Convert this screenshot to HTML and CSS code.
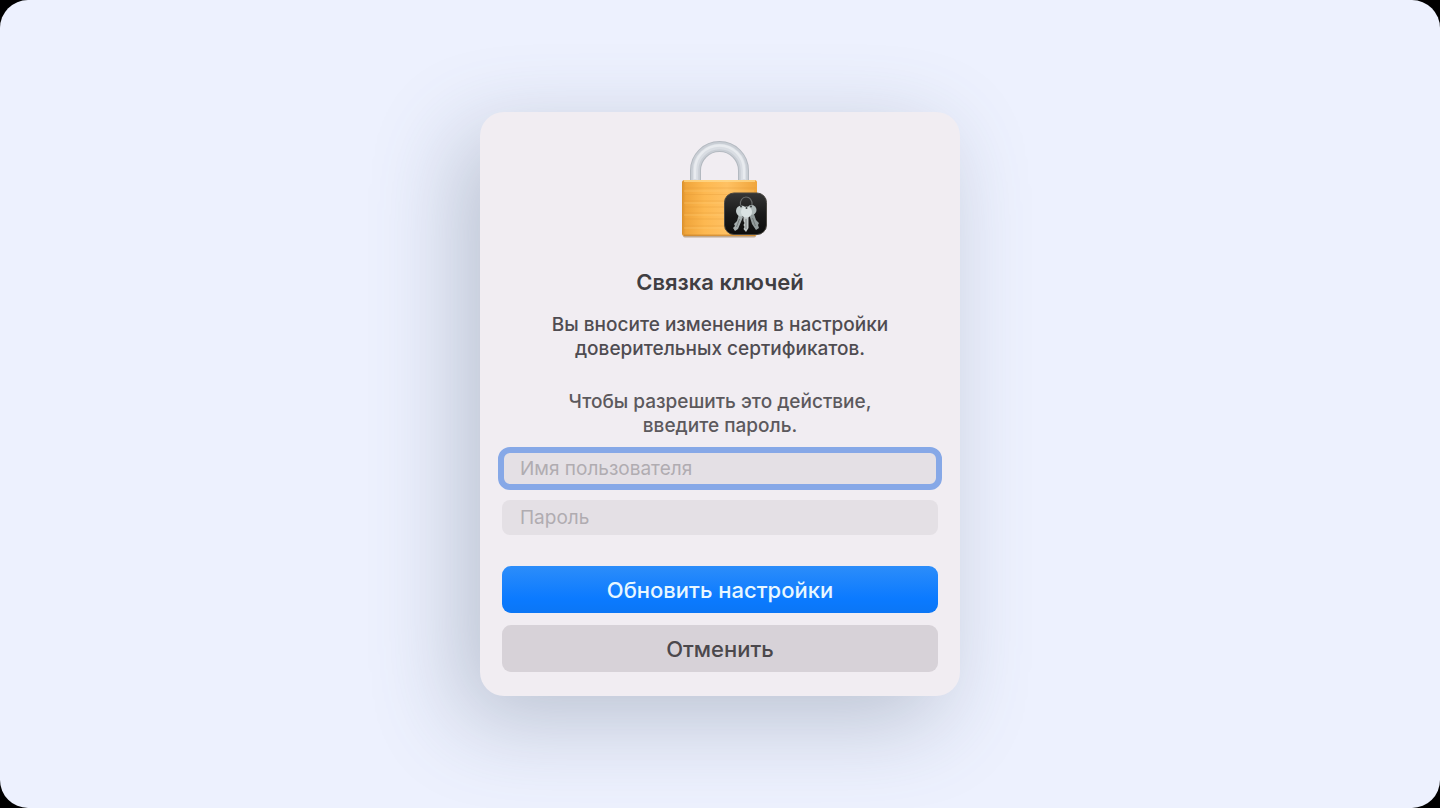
FILE: index.html
```html
<!DOCTYPE html>
<html lang="ru">
<head>
    <meta charset="UTF-8">
    <meta name="viewport" content="width=device-width, initial-scale=1.0">
    <title>Связка ключей</title>
    <link rel="stylesheet" href="styles.css">
</head>
<body>
    <main class="stage">
        <form class="dialog">
            <svg class="lock" viewBox="670 138 100 102" aria-hidden="true">
                <defs>
                    <linearGradient id="brass" x1="0" x2="1" y1="0" y2="0">
                        <stop offset="0" stop-color="#d98f2c"/>
                        <stop offset="0.05" stop-color="#f0a53b"/>
                        <stop offset="0.3" stop-color="#fdb850"/>
                        <stop offset="0.6" stop-color="#ffc162"/>
                        <stop offset="1" stop-color="#f0a53c"/>
                    </linearGradient>
                    <linearGradient id="tile" x1="0" x2="0" y1="0" y2="1">
                        <stop offset="0" stop-color="#363636"/>
                        <stop offset="0.5" stop-color="#1b1b1b"/>
                        <stop offset="1" stop-color="#0c0c0c"/>
                    </linearGradient>
                </defs>
                <!-- shackle -->
                <g fill="none">
                    <path d="M695.500 180.500V170.500a24 24 0 0 1 48 0v10" stroke="#b3b9c0" stroke-width="11"/>
                    <path d="M695.500 180.500V170.500a24 24 0 0 1 48 0v10" stroke="#c9ced5" stroke-width="9"/>
                    <path d="M695.500 180.500V170.500a24 24 0 0 1 48 0v10" stroke="#d9dde3" stroke-width="5.500"/>
                    <path d="M695 179V170a24.500 24.500 0 0 1 49 0v9" stroke="#e8ebef" stroke-width="2.500"/>
                </g>
                <!-- body -->
                <rect x="683" y="233" width="73" height="4.500" rx="1.700" fill="#a98c68" opacity="0.700"/>
                <rect x="682" y="180" width="75" height="56" rx="2.500" fill="url(#brass)"/>
                <path d="M684 181h71" stroke="#ffdb8d" stroke-width="1.500"/>
                <path d="M683 188h73M683 194.500h73M683 201h73M683 207h73M683 213h73M683 219h73M683 226h73" stroke="#e39a38" stroke-width="0.700" opacity="0.450"/>
                <path d="M684 191h70M684 203h70M684 215h70M684 228h70" stroke="#ffd17d" stroke-width="0.800" opacity="0.500"/>
                <path d="M684 235.200h71" stroke="#c6812e" stroke-width="1"/>
                <!-- badge with keys -->
                <rect x="724.500" y="193" width="42" height="41.500" rx="9.500" fill="url(#tile)" stroke="#4b4842" stroke-width="1"/>
                <path d="M740.500 205c-1-4 2-8 5.500-8s6.500 3 6 8" fill="none" stroke="#696c6c" stroke-width="1.200"/>
                <path d="M739 214l4 3-5 12-3 2-2-3 2-2-1-2 3-3z" fill="#a5adad"/>
                <path d="M749 214l4-3 3 9 3 3-1 2 1 3-3 2-4-6z" fill="#929b9b"/>
                <path d="M743.500 214h5v14l-2.500 4-2.500-3 1-2-1-2 1-2-1-2z" fill="#c0c6c6"/>
                <circle cx="741.500" cy="211" r="5.500" fill="#c4cece"/>
                <circle cx="751.500" cy="210" r="5" fill="#afb9b9"/>
                <circle cx="746.500" cy="212" r="5.500" fill="#dae2e2"/>
                <circle cx="741" cy="206.500" r="1" fill="#3b4040"/>
                <circle cx="746.500" cy="208" r="1" fill="#3b4040"/>
                <circle cx="751" cy="206.500" r="1" fill="#3b4040"/>
                <path d="M746 219v10M739.500 219l-3 8M752.500 218l3 8" stroke="#69706f" stroke-width="0.800" fill="none"/>
            </svg>
            <h1 class="title">Связка ключей</h1>
            <p class="message">Вы вносите изменения в настройки доверительных сертификатов.</p>
            <p class="message hint">Чтобы разрешить это действие, введите пароль.</p>
            <input class="field active" type="text" aria-label="Имя пользователя" placeholder="Имя пользователя">
            <input class="field" type="password" aria-label="Пароль" placeholder="Пароль">
            <div class="actions">
                <button class="button primary" type="submit">Обновить настройки</button>
                <button class="button" type="button">Отменить</button>
            </div>
        </form>
    </main>
</body>
</html>
```
FILE: styles.css
```css
* {
    box-sizing: border-box;
}
body {
    margin: 0;
    background-color: #000;
    font-family: Inter, "Liberation Sans", sans-serif;
}
.stage {
    display: flex;
    justify-content: center;
    align-items: center;
    min-height: 100vh;
    background-color: #edf1fe;
    border-radius: 28px;
    overflow: hidden;
}
.dialog {
    display: flex;
    flex-direction: column;
    width: 480px;
    max-width: 100%;
    padding: 26px 22px 24px;
    background-color: #f1edf2;
    border-radius: 24px;
    box-shadow: -20px 24px 88px rgba(80, 95, 115, 0.32);
}
.lock {
    width: 100px;
    height: 102px;
    align-self: center;
}
.title {
    margin: 28px 0 17px;
    font-size: 22px;
    line-height: 28px;
    font-weight: 600;
    text-align: center;
    color: #403e42;
}
.message {
    max-width: 360px;
    margin: 0 auto 29px;
    font-size: 19px;
    line-height: 24px;
    font-weight: 500;
    text-align: center;
    color: #4f4c51;
}
.hint {
    max-width: 320px;
    margin-bottom: 13px;
    color: #5c595d;
}
.field {
    width: 100%;
    height: 35px;
    margin: 0 0 14px;
    padding: 0 18px;
    border: none;
    border-radius: 8px;
    background-color: #e4e0e5;
    font-family: inherit;
    font-size: 19px;
    color: #4f4c51;
}
.field::placeholder {
    color: #b0acb1;
    opacity: 1;
}
.active {
    outline: 6px solid #86a8e7;
    outline-offset: -2px;
}
.actions {
    display: grid;
    gap: 12px;
    margin-top: 17px;
}
.button {
    height: 47px;
    padding: 0;
    border: none;
    border-radius: 9px;
    background-color: #d7d2d8;
    font-family: inherit;
    font-size: 22px;
    font-weight: 500;
    color: #4b484c;
    cursor: pointer;
}
.primary {
    background: linear-gradient(#2c8dfa, #0b7aff 70%, #0b76f5);
    color: #e8f7ff;
}
```
